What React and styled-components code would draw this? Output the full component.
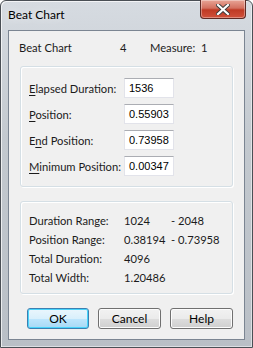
import React from "react";
import styled, { createGlobalStyle } from "styled-components";

const GlobalStyle = createGlobalStyle`
  html, body {
    margin: 0;
    padding: 0;
    background: #ffffff;
  }
  body {
    font-family: Lato, "Noto Sans", sans-serif;
    font-size: 11.2px;
    color: #1b1b1b;
  }
`;

const Window = styled.div`
  box-sizing: border-box;
  width: 253px;
  height: 348px;
  display: flex;
  flex-direction: column;
  padding: 0 7px 7px 7px;
  border: 1px solid #4a4f55;
  border-radius: 6px 6px 0 0;
  background: linear-gradient(180deg, #d6dbe1 0%, #c3c9cf 40%, #b9bfc6 100%);
  box-shadow: inset 1px 1px 0 rgba(255, 255, 255, 0.7), inset -1px -1px 0 rgba(255, 255, 255, 0.5);
`;

const TitleBar = styled.div`
  height: 29px;
  display: flex;
  align-items: flex-start;
  justify-content: space-between;
`;

const Title = styled.div`
  padding: 6px 0 0 0;
  font-size: 12px;
  color: #000;
  text-shadow: 0 0 8px rgba(255, 255, 255, 0.9);
`;

const CloseButton = styled.div`
  margin-top: -1px;
  margin-right: -1px;
  width: 46px;
  height: 19px;
  box-sizing: border-box;
  border: 1px solid #5e2a24;
  border-top: none;
  border-radius: 0 0 4px 4px;
  background: linear-gradient(180deg, #e8a596 0%, #d3705f 45%, #bf3a24 55%, #d0513b 100%);
  display: flex;
  align-items: center;
  justify-content: center;
  box-shadow: inset 0 0 0 1px rgba(255, 255, 255, 0.35);
`;

const Client = styled.div`
  flex: 1;
  background: #f0f0f0;
  border: 1px solid #7b8592;
  display: flex;
  flex-direction: column;
  padding: 0 11px 0 11px;
`;

const HeaderRow = styled.div`
  display: grid;
  grid-template-columns: 101px 30px 51px auto;
  height: 19px;
  align-items: center;
  margin: 7px 0 0 -1px;
`;

const Group = styled.div`
  border: 1px solid #d5dfe5;
  border-radius: 3px;
  box-shadow: inset 1px 1px 0 #ffffff, 1px 1px 0 #ffffff;
  padding: ${(p) => p.$pad};
  margin-top: ${(p) => p.$top}px;
  display: flex;
  flex-direction: column;
  gap: ${(p) => p.$gap};
`;

const FieldRow = styled.div`
  display: grid;
  grid-template-columns: 95px 50px;
  align-items: center;
  height: 20px;
`;

const Label = styled.span`
  white-space: nowrap;
  u {
    text-decoration: underline;
    text-underline-offset: 2px;
  }
`;

const Input = styled.div`
  box-sizing: border-box;
  height: 20px;
  width: 50px;
  background: #fff;
  border: 1px solid #e2e3ea;
  border-top-color: #abadb3;
  padding: 0 0 0 4px;
  display: flex;
  align-items: center;
  font-family: "Liberation Sans", Arial, sans-serif;
  font-size: 11px;
  color: #000;
`;

const InfoRow = styled.div`
  display: grid;
  grid-template-columns: 95px 47px auto;
  align-items: center;
  height: 19px;
`;

const ButtonRow = styled.div`
  display: flex;
  gap: 9px;
  margin: 14px 0 0 7px;
`;

const Button = styled.div`
  box-sizing: border-box;
  width: ${(p) => p.$w}px;
  height: 21px;
  border: 1px solid ${(p) => (p.$default ? "#3c7fb1" : "#707070")};
  border-radius: 3px;
  background: ${(p) =>
    p.$default
      ? "linear-gradient(180deg, #eaf6fd 0%, #d9f0fc 50%, #bee6fd 51%, #a7d9f5 100%)"
      : "linear-gradient(180deg, #f2f2f2 0%, #ebebeb 50%, #dddddd 51%, #cfcfcf 100%)"};
  box-shadow: inset 0 0 0 1px ${(p) => (p.$default ? "#48d4fb" : "#fcfcfc")};
  display: flex;
  align-items: center;
  justify-content: center;
  font-size: 12px;
  color: #000;
`;

const CloseIcon = () => (
  <svg width="14" height="11" viewBox="0 0 14 11">
    <path
      d="M2 1 L12 10 M12 1 L2 10"
      stroke="#3b3b3b"
      strokeWidth="4"
      strokeLinecap="square"
    />
    <path
      d="M2 1 L12 10 M12 1 L2 10"
      stroke="#ffffff"
      strokeWidth="2.2"
      strokeLinecap="square"
    />
  </svg>
);

const fields = [
  { label: ["", "E", "lapsed Duration:"], value: "1536" },
  { label: ["", "P", "osition:"], value: "0.55903" },
  { label: ["E", "n", "d Position:"], value: "0.73958" },
  { label: ["", "M", "inimum Position:"], value: "0.00347" },
];

const info = [
  ["Duration Range:", "1024", "- 2048"],
  ["Position Range:", "0.38194", "- 0.73958"],
  ["Total Duration:", "4096", ""],
  ["Total Width:", "1.20486", ""],
];

export default function App() {
  return (
    <>
      <GlobalStyle />
      <Window>
        <TitleBar>
          <Title>Beat Chart</Title>
          <CloseButton>
            <CloseIcon />
          </CloseButton>
        </TitleBar>
        <Client>
          <HeaderRow>
            <span>Beat Chart</span>
            <span>4</span>
            <span>Measure:</span>
            <span>1</span>
          </HeaderRow>
          <Group $top={9} $pad="11px 0 10px 8px" $gap="6px">
            {fields.map((f) => (
              <FieldRow key={f.value}>
                <Label>
                  {f.label[0]}
                  <u>{f.label[1]}</u>
                  {f.label[2]}
                </Label>
                <Input>{f.value}</Input>
              </FieldRow>
            ))}
          </Group>
          <Group $top={14} $pad="9px 0 6px 8px" $gap="0px">
            {info.map((r) => (
              <InfoRow key={r[0]}>
                <span>{r[0]}</span>
                <span>{r[1]}</span>
                <span>{r[2]}</span>
              </InfoRow>
            ))}
          </Group>
          <ButtonRow>
            <Button $w={63} $default>OK</Button>
            <Button $w={64}>Cancel</Button>
            <Button $w={64}>Help</Button>
          </ButtonRow>
        </Client>
      </Window>
    </>
  );
}
